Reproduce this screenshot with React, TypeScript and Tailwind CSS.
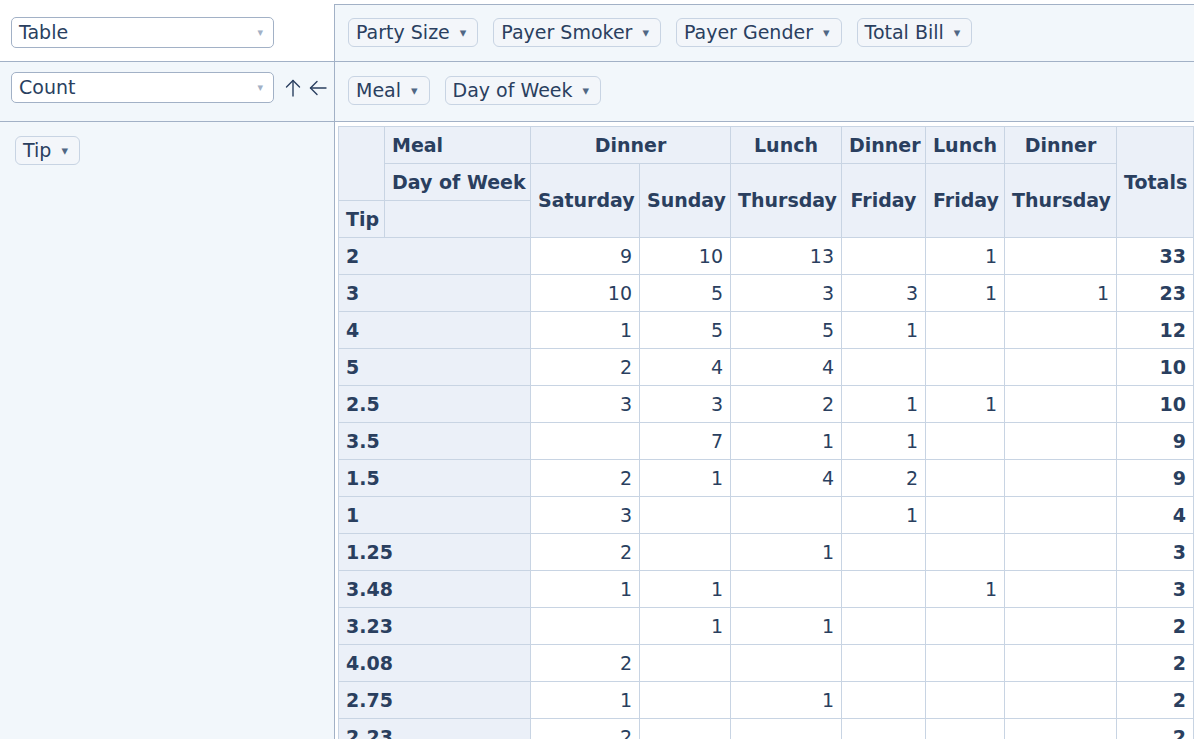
import React from "react";

const FONT = { fontFamily: '"DejaVu Sans", Verdana, sans-serif' };

function Chip({ name }: { name: string }) {
  return (
    <span className="inline-flex items-center h-[29px] pl-[7px] pr-[11px] border border-[#c8d4e3] rounded-[6px] bg-[#f3f6fa] text-[19px] leading-none whitespace-nowrap text-[#2a3f5f]">
      {name}
      <span className="ml-[10px] text-[#506784] text-[13px]">▾</span>
    </span>
  );
}

function Dropdown({ value }: { value: string }) {
  return (
    <div className="flex items-center justify-between w-[263px] h-[31px] pl-[7px] pr-[10px] border border-[#a2b1c6] rounded-[5px] bg-white text-[19px] leading-none text-[#2a3f5f]">
      <span>{value}</span>
      <span className="text-[#a2b1c6] text-[11px]">▾</span>
    </div>
  );
}

function UpArrow() {
  return (
    <svg width="16" height="18" viewBox="0 0 16 18" fill="none" stroke="#2a3f5f" strokeWidth="1.4" strokeLinecap="round" strokeLinejoin="round">
      <path d="M8 1.5V17" />
      <path d="M1.5 8L8 1.5L14.5 8" />
    </svg>
  );
}

function LeftArrow() {
  return (
    <svg width="18" height="16" viewBox="0 0 18 16" fill="none" stroke="#2a3f5f" strokeWidth="1.4" strokeLinecap="round" strokeLinejoin="round">
      <path d="M1.5 8H17" />
      <path d="M8 1.5L1.5 8L8 14.5" />
    </svg>
  );
}

type Row = [string, (number | null)[], number];
const rows: Row[] = [
  ["2", [9, 10, 13, null, 1, null], 33],
  ["3", [10, 5, 3, 3, 1, 1], 23],
  ["4", [1, 5, 5, 1, null, null], 12],
  ["5", [2, 4, 4, null, null, null], 10],
  ["2.5", [3, 3, 2, 1, 1, null], 10],
  ["3.5", [null, 7, 1, 1, null, null], 9],
  ["1.5", [2, 1, 4, 2, null, null], 9],
  ["1", [3, null, null, 1, null, null], 4],
  ["1.25", [2, null, 1, null, null, null], 3],
  ["3.48", [1, 1, null, null, 1, null], 3],
  ["3.23", [null, 1, 1, null, null, null], 2],
  ["4.08", [2, null, null, null, null, null], 2],
  ["2.75", [1, null, 1, null, null, null], 2],
  ["2.23", [2, null, null, null, null, null], 2],
  ["2.01", [1, 1, null, null, null, null], 2],
];

const th =
  "bg-[#ebf0f8] border border-[#c8d4e3] h-[37px] px-[7px] py-0 font-bold text-[19px] text-[#2a3f5f] whitespace-nowrap";
const td =
  "bg-white border border-[#c8d4e3] h-[37px] px-[7px] py-0 text-[19px] text-right text-[#2a3f5f] align-middle";

export default function App() {
  return (
    <div className="w-[1194px] bg-white text-[#2a3f5f] overflow-hidden" style={FONT}>
      <div className="grid grid-cols-[334px_860px]">
        {/* row 1 */}
        <div className="h-[62px] border-b border-[#a2b1c6] bg-white pl-[11px] pt-[17px]">
          <Dropdown value="Table" />
        </div>
        <div className="mt-[4px] h-[58px] border-t border-b border-l border-[#a2b1c6] bg-[#f2f7fb] pl-[13px] pt-[13px] flex gap-[15px] items-start">
          <Chip name="Party Size" />
          <Chip name="Payer Smoker" />
          <Chip name="Payer Gender" />
          <Chip name="Total Bill" />
        </div>
        {/* row 2 */}
        <div className="h-[60px] border-b border-[#a2b1c6] bg-[#f2f7fb] pl-[11px] pt-[10px] flex items-start">
          <Dropdown value="Count" />
          <span className="ml-[11px] w-[16px] h-[31px] flex items-center justify-center">
            <UpArrow />
          </span>
          <span className="ml-[8px] w-[18px] h-[31px] flex items-center justify-center">
            <LeftArrow />
          </span>
        </div>
        <div className="h-[60px] border-b border-l border-[#a2b1c6] bg-[#f2f7fb] pl-[13px] pt-[14px] flex gap-[15px] items-start">
          <Chip name="Meal" />
          <Chip name="Day of Week" />
        </div>
        {/* row 3 */}
        <div className="bg-[#f2f7fb] pl-[15px] pt-[14px] min-h-[640px]">
          <Chip name="Tip" />
        </div>
        <div className="border-l border-[#a2b1c6] bg-white pl-[3px] pt-[4px] min-h-[640px]">
          <table className="table-fixed border-collapse w-[855px]">
            <colgroup>
              <col className="w-[46px]" />
              <col className="w-[146px]" />
              <col className="w-[109px]" />
              <col className="w-[91px]" />
              <col className="w-[111px]" />
              <col className="w-[84px]" />
              <col className="w-[79px]" />
              <col className="w-[112px]" />
              <col className="w-[77px]" />
            </colgroup>
            <thead>
              <tr>
                <th className={th} rowSpan={2}></th>
                <th className={th + " text-left"}>Meal</th>
                <th className={th + " text-center"} colSpan={2}>Dinner</th>
                <th className={th + " text-center"}>Lunch</th>
                <th className={th + " text-center"}>Dinner</th>
                <th className={th + " text-center"}>Lunch</th>
                <th className={th + " text-center"}>Dinner</th>
                <th className={th + " text-center"} rowSpan={3}>Totals</th>
              </tr>
              <tr>
                <th className={th + " text-left"}>Day of Week</th>
                <th className={th + " text-center"} rowSpan={2}>Saturday</th>
                <th className={th + " text-center"} rowSpan={2}>Sunday</th>
                <th className={th + " text-center"} rowSpan={2}>Thursday</th>
                <th className={th + " text-center"} rowSpan={2}>Friday</th>
                <th className={th + " text-center"} rowSpan={2}>Friday</th>
                <th className={th + " text-center"} rowSpan={2}>Thursday</th>
              </tr>
              <tr>
                <th className={th + " text-left"}>Tip</th>
                <th className={th}></th>
              </tr>
            </thead>
            <tbody>
              {rows.map(([label, vals, total]) => (
                <tr key={label}>
                  <th className={th + " text-left"} colSpan={2}>{label}</th>
                  {vals.map((v, i) => (
                    <td key={i} className={td}>{v ?? ""}</td>
                  ))}
                  <td className={td + " font-bold"}>{total}</td>
                </tr>
              ))}
            </tbody>
          </table>
        </div>
      </div>
    </div>
  );
}
